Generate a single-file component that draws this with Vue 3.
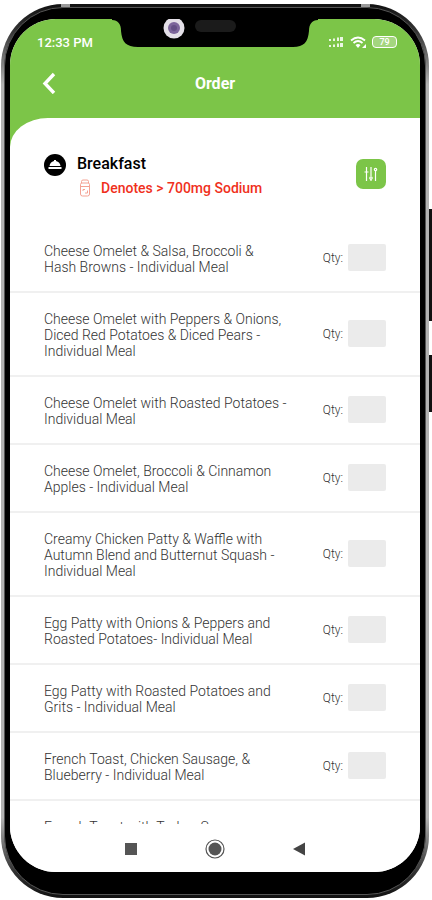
<template>
  <div class="stage">
    <div class="phone">
      <span class="side-key volume"></span>
      <span class="side-key power"></span>
      <span class="antenna antenna-left"></span>
      <span class="antenna antenna-right"></span>
      <div class="bezel">
        <div class="screen">
          <header class="top">
            <div class="notch">
              <svg viewBox="0 0 206 29" width="206" height="29" aria-hidden="true">
                <path d="M0 0H206V1C200 1 197 5 197 12C196 23 192 28 181 28H26C14 28 10 23 9 12C9 5 6 1 0 1Z" fill="#000" />
                <circle cx="62" cy="9" r="10.5" fill="#e4e0e8" />
                <circle cx="62" cy="9" r="6" fill="#7c659b" />
                <circle cx="62" cy="9" r="3" fill="#644f85" />
                <rect x="83" y="1" width="41" height="12" rx="6" fill="#1b1b1b" />
              </svg>
            </div>
            <div class="status">
              <span>12:33 PM</span>
              <div class="status-icons">
                <svg viewBox="0 0 17 12" width="17" height="12" fill="#fff" fill-opacity="0.85" aria-hidden="true">
                  <path d="M1 3h2v2H1zM5 2.500h2V5H5zM9 1.500h2V5H9zM12 1h3v4h-3zM1 9h2v2H1zM5 8.500h2V11H5zM9 7.500h2V11H9zM12 7h3v4h-3z" />
                </svg>
                <svg viewBox="0 0 17 13" width="17" height="13" aria-hidden="true">
                  <g fill="none" stroke="#fff" stroke-width="1.800">
                    <path d="M1 4.500Q8 -1.500 15 4.500" />
                    <path d="M3.500 7Q8 3 12.500 7" />
                  </g>
                  <path d="M5.500 9Q8 7 10.500 9L8 12ZM12 12h4V8z" fill="#fff" />
                </svg>
                <span class="battery">79</span>
              </div>
            </div>
            <div class="title-bar">
              <button class="back" aria-label="Back">
                <svg viewBox="0 0 14 22" width="14" height="22" aria-hidden="true">
                  <path d="M12 2L3 11.500L12 21" fill="none" stroke="#fff" stroke-width="3.400" />
                </svg>
              </button>
              <h1>Order</h1>
            </div>
          </header>

          <main class="sheet">
            <section class="meal">
              <svg class="cloche" viewBox="0 0 22 22" width="22" height="22" aria-hidden="true">
                <circle cx="11" cy="11" r="11" fill="#000" />
                <path d="M5.500 12Q6 8 10 7V6h2V7Q16 8 16.500 12ZM4.500 13h13v2h-13z" fill="#fff" />
              </svg>
              <div class="meal-text">
                <h2>Breakfast</h2>
                <p class="note">
                  <svg viewBox="0 0 12 18" width="12" height="18" fill="none" stroke="#f4a294" aria-hidden="true">
                    <path d="M2.500 4V2.500Q2.500 1 4 1H8Q9.500 1 9.500 2.500V4M1.500 5.500Q1.500 4 3 4H9Q10.500 4 10.500 5.500V15Q10.500 17 8.500 17H3.500Q1.500 17 1.500 15ZM2 7.500H10M4 12V10.500H6M6 14H8.500V11.500" />
                  </svg>
                  Denotes &gt; 700mg Sodium
                </p>
              </div>
              <button class="filter" aria-label="Filter">
                <svg viewBox="0 0 16 16" width="16" height="16" fill="none" stroke="#fff" stroke-width="1.200" aria-hidden="true">
                  <path d="M3.500 1V15M8 1V10M8 13V15M12.500 5V15M1.500 6H5.500" />
                  <circle cx="8" cy="12" r="1.200" />
                  <circle cx="12.500" cy="3.500" r="1.200" />
                </svg>
              </button>
            </section>

            <ul class="items">
              <li v-for="(item, i) in items" :key="i">
                <label :for="`qty-${i}`" class="name">
                  <span v-for="line in item" :key="line">{{ line }}</span>
                </label>
                <label :for="`qty-${i}`" class="qty">Qty:</label>
                <input :id="`qty-${i}`" v-model="quantities[i]" type="text" inputmode="numeric" />
              </li>
            </ul>
          </main>

          <nav class="keys">
            <button aria-label="Recent apps">
              <svg viewBox="0 0 20 20" width="20" height="20"><rect x="4" y="4" width="12" height="12" fill="#555" /></svg>
            </button>
            <button aria-label="Home">
              <svg viewBox="0 0 20 20" width="20" height="20">
                <circle cx="10" cy="10" r="9" fill="none" stroke="#555" stroke-width="1.200" />
                <circle cx="10" cy="10" r="6.500" fill="#555" />
              </svg>
            </button>
            <button aria-label="Back">
              <svg viewBox="0 0 20 20" width="20" height="20"><path d="M4 10L16 3.500V16.500Z" fill="#444" /></svg>
            </button>
          </nav>
        </div>
      </div>
    </div>
  </div>
</template>

<script setup>
import { ref } from 'vue'

const items = [
  ['Cheese Omelet & Salsa, Broccoli &', 'Hash Browns - Individual Meal'],
  ['Cheese Omelet with Peppers & Onions,', 'Diced Red Potatoes & Diced Pears -', 'Individual Meal'],
  ['Cheese Omelet with Roasted Potatoes -', 'Individual Meal'],
  ['Cheese Omelet, Broccoli & Cinnamon', 'Apples - Individual Meal'],
  ['Creamy Chicken Patty & Waffle with', 'Autumn Blend and Butternut Squash -', 'Individual Meal'],
  ['Egg Patty with Onions & Peppers and', 'Roasted Potatoes- Individual Meal'],
  ['Egg Patty with Roasted Potatoes and', 'Grits - Individual Meal'],
  ['French Toast, Chicken Sausage, &', 'Blueberry - Individual Meal'],
  ['French Toast with Turkey Sausage', 'and Cinnamon Apples -', 'Individual Meal']
]

const quantities = ref(items.map(() => ''))
</script>

<style>
body {
  margin: 0;
  background: #fff;
}
</style>

<style scoped>
* {
  box-sizing: border-box;
}

.stage {
  height: 100vh;
  padding: 4px 3px 2px 1px;
  font-family: Roboto, 'Liberation Sans', sans-serif;
}

.phone {
  position: relative;
  height: 100%;
  padding: 3px;
  border-radius: 62px;
  background: linear-gradient(to bottom, #111 0, #333 3%, #b2b2b2 9%, #b2b2b2 91%, #333 97%, #111 100%);
}

.side-key {
  position: absolute;
  right: -3px;
  width: 3px;
  background: #111;
}

.volume {
  top: 205px;
  height: 112px;
}

.power {
  top: 351px;
  height: 57px;
}

.antenna {
  position: absolute;
  top: 0;
  width: 9px;
  height: 3px;
  background: #999;
}

.antenna-left {
  left: 60px;
}

.antenna-right {
  right: 59px;
}

.bezel {
  height: 100%;
  padding: 11px 5px 22px;
  border: 1px solid #555;
  border-radius: 59px;
  background: #000;
}

.screen {
  height: 100%;
  display: flex;
  flex-direction: column;
  overflow: hidden;
  border-radius: 46px;
  background: #fff;
}

.top {
  position: relative;
  flex: none;
  height: 128px;
  padding-top: 14px;
  background: #7cc548;
}

.notch {
  position: absolute;
  top: 0;
  left: 0;
  right: 0;
  display: flex;
  justify-content: center;
}

.status {
  display: flex;
  align-items: center;
  justify-content: space-between;
  height: 18px;
  padding: 0 23px 0 27px;
  color: #fff;
  font-size: 13px;
  font-weight: 500;
}

.status-icons {
  display: flex;
  align-items: center;
  gap: 5px;
}

.battery {
  width: 25px;
  height: 12px;
  border: 1px solid #fff;
  border-radius: 4px;
  background: #a4d67f;
  font-size: 9px;
  line-height: 10px;
  text-align: center;
}

.title-bar {
  position: relative;
  display: flex;
  align-items: center;
  justify-content: center;
  height: 64px;
}

.title-bar h1 {
  margin: 0;
  color: #fff;
  font-size: 16px;
  font-weight: 700;
}

.back {
  position: absolute;
  left: 32px;
  display: flex;
  padding: 0;
  border: none;
  background: none;
  cursor: pointer;
}

.sheet {
  position: relative;
  flex: 1;
  min-height: 0;
  margin-top: -29px;
  overflow: hidden;
  border-top-left-radius: 38px 29px;
  background: #fff;
}

.meal {
  display: flex;
  align-items: flex-start;
  height: 107px;
  padding: 36px 34px 0;
}

.meal-text {
  flex: 1;
  margin-left: 11px;
}

.meal-text h2 {
  margin: 0;
  font-size: 16px;
  font-weight: 500;
  line-height: 20px;
}

.note {
  display: flex;
  align-items: center;
  gap: 10px;
  margin: 5px 0 0 2px;
  color: #f0301c;
  font-size: 14px;
  font-weight: 500;
  line-height: 18px;
}

.filter {
  display: flex;
  align-items: center;
  justify-content: center;
  width: 30px;
  height: 30px;
  margin-top: 5px;
  padding: 0;
  border: none;
  border-radius: 7px;
  background: #7cc548;
  cursor: pointer;
}

.items {
  margin: 0;
  padding: 0;
  list-style: none;
}

.items li {
  display: flex;
  align-items: center;
  padding: 15px 34px 16px;
  border-bottom: 2px solid #f0f0f0;
}

.name {
  flex: 1;
  padding-top: 3px;
  color: #333;
  font-size: 14px;
  font-weight: 300;
  line-height: 16px;
}

.name span {
  display: block;
  white-space: nowrap;
}

.qty {
  margin-right: 5px;
  color: #333;
  font-size: 12px;
  font-weight: 300;
}

.items input {
  width: 38px;
  height: 27px;
  padding: 0 4px;
  border: none;
  border-radius: 2px;
  background: #ebebeb;
  font: inherit;
  font-size: 12px;
  text-align: center;
}

.keys {
  flex: none;
  display: flex;
  justify-content: center;
  gap: 64px;
  height: 48px;
  padding-top: 15px;
  background: #fff;
}

.keys button {
  display: flex;
  width: 20px;
  height: 20px;
  padding: 0;
  border: none;
  background: none;
  cursor: pointer;
}
</style>
